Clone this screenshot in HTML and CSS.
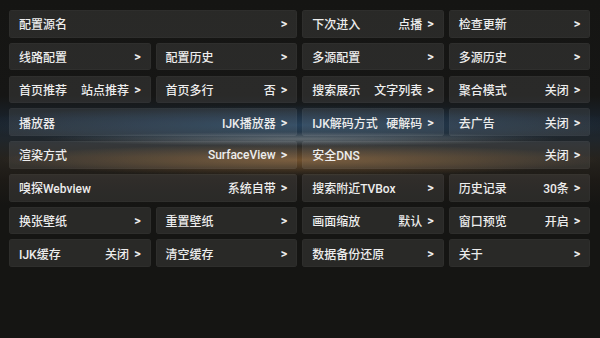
FILE: index.html
```html
<!DOCTYPE html>
<html lang="zh">
<head>
<meta charset="utf-8">
<link rel="stylesheet" href="styles.css">
</head>
<body>
<div class="grid">
  <div class="tile span2"><span class="label">配置源名</span><span class="arrow">&gt;</span></div>
  <div class="tile"><span class="label">下次进入</span><span class="value">点播</span><span class="arrow">&gt;</span></div>
  <div class="tile"><span class="label">检查更新</span><span class="arrow">&gt;</span></div>

  <div class="tile"><span class="label">线路配置</span><span class="arrow">&gt;</span></div>
  <div class="tile"><span class="label">配置历史</span><span class="arrow">&gt;</span></div>
  <div class="tile"><span class="label">多源配置</span><span class="arrow">&gt;</span></div>
  <div class="tile"><span class="label">多源历史</span><span class="arrow">&gt;</span></div>

  <div class="tile"><span class="label">首页推荐</span><span class="value">站点推荐</span><span class="arrow">&gt;</span></div>
  <div class="tile"><span class="label">首页多行</span><span class="value">否</span><span class="arrow">&gt;</span></div>
  <div class="tile"><span class="label">搜索展示</span><span class="value">文字列表</span><span class="arrow">&gt;</span></div>
  <div class="tile"><span class="label">聚合模式</span><span class="value">关闭</span><span class="arrow">&gt;</span></div>

  <div class="tile span2"><span class="label">播放器</span><span class="value">IJK播放器</span><span class="arrow">&gt;</span></div>
  <div class="tile"><span class="label">IJK解码方式</span><span class="value">硬解码</span><span class="arrow">&gt;</span></div>
  <div class="tile"><span class="label">去广告</span><span class="value">关闭</span><span class="arrow">&gt;</span></div>

  <div class="tile span2"><span class="label">渲染方式</span><span class="value">SurfaceView</span><span class="arrow">&gt;</span></div>
  <div class="tile span2"><span class="label">安全DNS</span><span class="value">关闭</span><span class="arrow">&gt;</span></div>

  <div class="tile span2"><span class="label">嗅探Webview</span><span class="value">系统自带</span><span class="arrow">&gt;</span></div>
  <div class="tile"><span class="label">搜索附近TVBox</span><span class="arrow">&gt;</span></div>
  <div class="tile"><span class="label">历史记录</span><span class="value">30条</span><span class="arrow">&gt;</span></div>

  <div class="tile"><span class="label">换张壁纸</span><span class="arrow">&gt;</span></div>
  <div class="tile"><span class="label">重置壁纸</span><span class="arrow">&gt;</span></div>
  <div class="tile"><span class="label">画面缩放</span><span class="value">默认</span><span class="arrow">&gt;</span></div>
  <div class="tile"><span class="label">窗口预览</span><span class="value">开启</span><span class="arrow">&gt;</span></div>

  <div class="tile"><span class="label">IJK缓存</span><span class="value">关闭</span><span class="arrow">&gt;</span></div>
  <div class="tile"><span class="label">清空缓存</span><span class="arrow">&gt;</span></div>
  <div class="tile"><span class="label">数据备份还原</span><span class="arrow">&gt;</span></div>
  <div class="tile"><span class="label">关于</span><span class="arrow">&gt;</span></div>
</div>
</body>
</html>
```

FILE: styles.css
```css
html, body {
  margin: 0;
  height: 100%;
}
body {
  width: 600px;
  height: 338px;
  overflow: hidden;
  box-sizing: border-box;
  padding: 10px 9.7px 0 9.3px;
  font-family: Roboto, "Noto Sans CJK SC", sans-serif;
  font-size: 12px;
  font-weight: 500;
  color: #ededed;
  background:
    radial-gradient(ellipse 260px 7px at 50% 139px, rgba(210,215,215,0.35), rgba(210,215,215,0) 100%),
    radial-gradient(ellipse 300px 16px at 50% 160px, rgba(200,135,65,0.45), rgba(200,135,65,0) 100%),
    radial-gradient(ellipse 340px 20px at 50% 125px, rgba(55,110,160,0.4), rgba(55,110,160,0) 100%),
    linear-gradient(to bottom, #151513 0, #161615 96px, #19212a 118px, #1f262c 138px, #26231e 158px, #1d1a16 180px, #151513 205px, #151513 100%);
}
.grid {
  display: grid;
  grid-template-columns: repeat(4, 1fr);
  grid-auto-rows: 27.6px;
  column-gap: 5.3px;
  row-gap: 5.2px;
}
.tile {
  display: flex;
  align-items: center;
  padding: 0 10px 0 9.7px;
  border-radius: 3px;
  background: rgba(255,255,255,0.085);
  box-shadow: inset 0 0 0 0.5px rgba(255,255,255,0.05);
  white-space: nowrap;
}
.span2 {
  grid-column: span 2;
}
.label {
  flex: 1;
}
.value {
  margin-right: 5px;
}
.arrow {
  font-family: Roboto, sans-serif;
  font-weight: 700;
  font-size: 12.5px;
}
```
